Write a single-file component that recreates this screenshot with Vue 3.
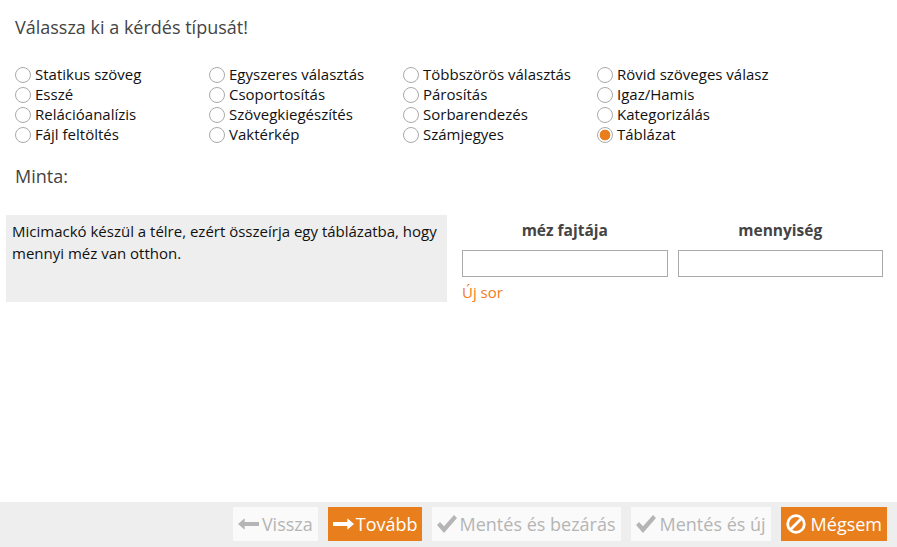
<template>
  <div class="page">
    <div class="content">
      <h2 class="title">Válassza ki a kérdés típusát!</h2>
      <div class="types">
        <label v-for="t in types" :key="t" class="type">
          <span class="radio" :class="{ on: t === selected }"></span>
          <span class="type-name">{{ t }}</span>
        </label>
      </div>
      <h3 class="sample-title">Minta:</h3>
      <div class="sample">
        <div class="question">Micimackó készül a télre, ezért összeírja egy táblázatba, hogy mennyi méz van otthon.</div>
        <div class="answer">
          <div class="cols">
            <div class="col">
              <div class="col-head">méz fajtája</div>
              <div class="box"></div>
            </div>
            <div class="col">
              <div class="col-head">mennyiség</div>
              <div class="box"></div>
            </div>
          </div>
          <a class="new-row">Új sor</a>
        </div>
      </div>
    </div>
    <div class="footer">
      <button class="btn off back">
        <svg width="21" height="14" viewBox="0 0 22 14"><path d="M0 7 7 1v4h15v4H7v4z" fill="currentColor" /></svg>
        Vissza
      </button>
      <button class="btn next">
        <svg width="21" height="14" viewBox="0 0 22 14"><path d="M22 7 15 1v4H0v4h15v4z" fill="currentColor" /></svg>
        Tovább
      </button>
      <button class="btn off save-close">
        <svg width="20" height="18" viewBox="0 0 20 18"><path d="M0 10 3 7l4 4.200L17 0l3 3L7 18z" fill="currentColor" /></svg>
        Mentés és bezárás
      </button>
      <button class="btn off save-new">
        <svg width="20" height="18" viewBox="0 0 20 18"><path d="M0 10 3 7l4 4.200L17 0l3 3L7 18z" fill="currentColor" /></svg>
        Mentés és új
      </button>
      <button class="btn cancel">
        <svg width="20" height="20" viewBox="0 0 20 20"><circle cx="10" cy="10" r="8.300" fill="none" stroke="currentColor" stroke-width="2.800" /><path d="M4.500 15.500 15.500 4.500" stroke="currentColor" stroke-width="2.800" /></svg>
        Mégsem
      </button>
    </div>
  </div>
</template>

<script setup>
const selected = "Táblázat";
const types = [
  "Statikus szöveg", "Egyszeres választás", "Többszörös választás", "Rövid szöveges válasz",
  "Esszé", "Csoportosítás", "Párosítás", "Igaz/Hamis",
  "Relációanalízis", "Szövegkiegészítés", "Sorbarendezés", "Kategorizálás",
  "Fájl feltöltés", "Vaktérkép", "Számjegyes", "Táblázat",
];
</script>

<style>
html, body {
  margin: 0;
  background: #fff;
}
</style>

<style scoped>
.page {
  width: 897px;
  height: 547px;
  display: flex;
  flex-direction: column;
  font-family: "Open Sans", sans-serif;
  overflow: hidden;
}
.content {
  flex: 1;
  padding: 15px 6px 0;
}
.title {
  margin: 0 0 0 9px;
  font-size: 18px;
  line-height: 24px;
  font-weight: 400;
  color: #444;
}
.types {
  display: grid;
  grid-template-columns: repeat(4, 194px);
  grid-auto-rows: 20px;
  margin: 26px 0 0 9px;
}
.type {
  display: flex;
  align-items: center;
  gap: 4px;
  font-size: 15px;
  line-height: 19px;
  color: #111;
}
.type-name {
  margin-bottom: 2px;
}
.radio {
  width: 14px;
  height: 14px;
  border: 1px solid #aaa;
  border-radius: 50%;
  background: #fff;
  flex: none;
}
.radio.on {
  background: radial-gradient(circle, #e87e1c 0 5px, #fff 5.700px);
}
.sample-title {
  margin: 19px 0 0 9px;
  font-size: 18px;
  line-height: 24px;
  font-weight: 400;
  color: #444;
}
.sample {
  display: flex;
  gap: 15px;
  margin-top: 27px;
}
.question {
  width: 441px;
  height: 87px;
  box-sizing: border-box;
  padding: 5px 6px;
  background: #eee;
  font-size: 15px;
  line-height: 22px;
  color: #111;
}
.answer {
  width: 421px;
}
.cols {
  display: flex;
  gap: 10px;
}
.col {
  flex: 1;
}
.col-head {
  height: 35px;
  line-height: 30px;
  text-align: center;
  font-size: 15.500px;
  font-weight: 700;
  color: #444;
}
.box {
  height: 25px;
  border: 1px solid #aaa;
  background: #fff;
}
.new-row {
  display: block;
  margin-top: 4px;
  font-size: 15px;
  line-height: 22px;
  color: #f47b20;
}
.footer {
  height: 45px;
  background: #eee;
  display: flex;
  justify-content: flex-end;
  align-items: flex-start;
  gap: 10px;
  padding: 5px 10px 0;
  box-sizing: border-box;
}
.btn {
  height: 34px;
  padding: 0 5px;
  border: 0;
  display: flex;
  align-items: center;
  background: #e87e1c;
  color: #fff;
  font-family: inherit;
  font-size: 18px;
}
.btn.off {
  background: #fafafa;
  color: #b5b5b5;
}
.back {
  gap: 3px;
}
.next {
  gap: 2px;
  padding-right: 4px;
}
.save-close {
  gap: 3px;
}
.save-new {
  gap: 4px;
}
.cancel {
  gap: 5px;
}
</style>
